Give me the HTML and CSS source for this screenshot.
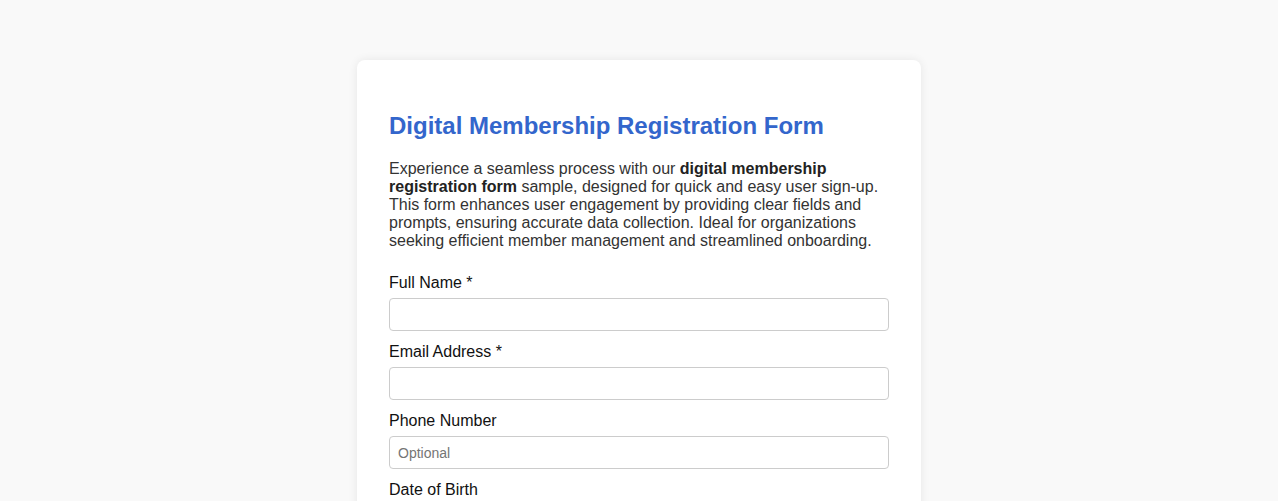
FILE: index.html
```html
<!DOCTYPE html>
<html lang="en">
<head>
<meta charset="utf-8">
<title>Digital Membership Registration Form</title>
<link rel="stylesheet" href="styles.css">
</head>
<body>
<div class="card">
  <h1 class="title">Digital Membership Registration Form</h1>
  <p class="intro">Experience a seamless process with our <strong>digital membership registration form</strong> sample, designed for quick and easy user sign-up. This form enhances user engagement by providing clear fields and prompts, ensuring accurate data collection. Ideal for organizations seeking efficient member management and streamlined onboarding.</p>
  <form class="form">
    <div class="group">
      <label class="label" for="name">Full Name *</label>
      <input class="input" id="name" type="text">
    </div>
    <div class="group">
      <label class="label" for="email">Email Address *</label>
      <input class="input" id="email" type="email">
    </div>
    <div class="group">
      <label class="label" for="phone">Phone Number</label>
      <input class="input" id="phone" type="tel" placeholder="Optional">
    </div>
    <div class="group">
      <label class="label" for="dob">Date of Birth</label>
      <input class="input" id="dob" type="text">
    </div>
  </form>
</div>
</body>
</html>
```
FILE: styles.css
```css
html, body {
  margin: 0;
  padding: 0;
}
body {
  background: #f9f9f9;
  font-family: "Liberation Sans", Arial, sans-serif;
  padding-top: 60px;
}
.card {
  width: 500px;
  margin: 0 auto;
  padding: 32px;
  background: #ffffff;
  border-radius: 8px;
  box-shadow: 0 0 10px rgba(0, 0, 0, 0.08);
}
.title {
  color: #3366cc;
  font-size: 24px;
  font-weight: bold;
  margin: 20px 0 20px;
}
.intro {
  color: #333333;
  font-size: 16px;
  margin: 0 0 24px;
}
.intro strong {
  color: #222222;
}
.form {
  margin: 0;
}
.group {
  margin-bottom: 12px;
}
.label {
  display: block;
  color: #111111;
  font-size: 16px;
  margin-bottom: 6px;
}
.input {
  display: block;
  box-sizing: border-box;
  width: 100%;
  height: 33px;
  padding: 0 8px;
  border: 1px solid #cccccc;
  border-radius: 4px;
  font-family: "Liberation Sans", Arial, sans-serif;
  font-size: 14px;
  background: #ffffff;
}
.input::placeholder {
  color: #757575;
}
```
